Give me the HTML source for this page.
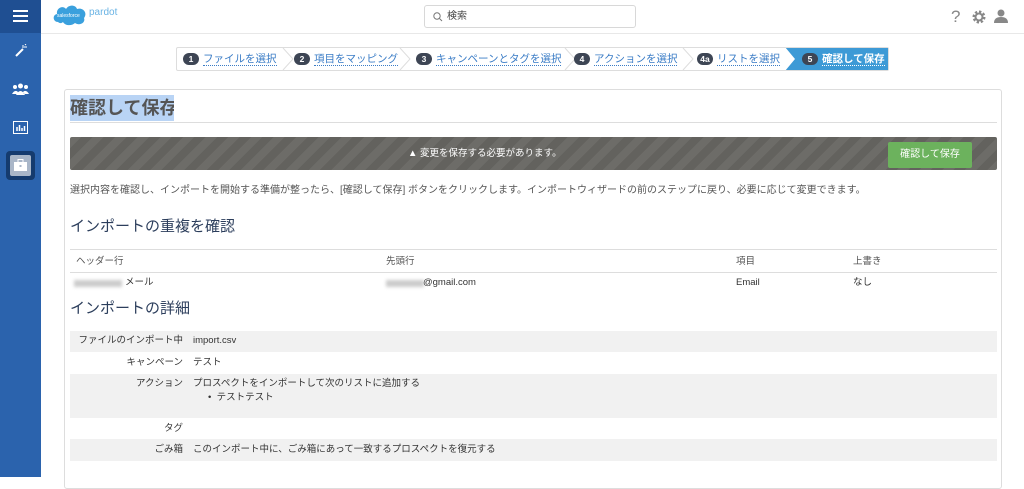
<!DOCTYPE html>
<html><head><meta charset="utf-8"><style>
*{box-sizing:border-box;margin:0;padding:0}
body{width:1024px;height:477px;overflow:hidden;background:#fff;font-family:"Liberation Sans","Noto Sans CJK JP",sans-serif;color:#333;position:relative}
.sb{position:absolute;left:0;top:0;width:41px;height:477px;background:#2b63ad}
.sbt{position:absolute;left:0;top:0;width:41px;height:33px;background:#1f4f92}
.hdr{position:absolute;left:41px;top:0;right:0;height:34px;border-bottom:1px solid #e8e8e8;background:#fff}
.search{position:absolute;left:424px;top:5px;width:212px;height:23px;border:1px solid #d8d8d8;border-radius:3px;font-size:10px;line-height:12px;color:#444;padding:5px 0 0 22px}
.crumbs{position:absolute;left:176px;top:47px;width:713px;height:24px;border:1px solid #ddd;border-radius:2px;background:#fff;font-size:10.5px;line-height:13px}
.st{position:absolute;top:5px;color:#3a7cc6;white-space:nowrap}
.st span.t{border-bottom:1px dotted #3a7cc6}
.num{display:inline-block;background:#3d4554;color:#fff;border-radius:7px;font-size:8.5px;font-weight:bold;height:12px;line-height:12px;text-align:center;min-width:16px;padding:0 3px;margin-right:4px;vertical-align:top}
.panel{position:absolute;left:64px;top:89px;width:938px;height:400px;border:1px solid #ddd;border-radius:3px}
.small{font-size:10px;color:#555;line-height:12px;white-space:nowrap}
.h2{position:absolute;left:70px;font-size:15px;line-height:20px;color:#2c3e5c;white-space:nowrap}
.row{position:absolute;left:70px;width:927px;font-size:9.5px;line-height:12px;color:#333}
.row span{white-space:nowrap}
.lab{position:absolute;right:814px;text-align:right}
.val{position:absolute;left:123px}
</style></head><body>
<div class="sb"><div class="sbt"></div>
<div style="position:absolute;left:13px;top:10px;width:15px;height:2px;background:#fff;box-shadow:0 5px 0 #fff,0 10px 0 #fff"></div>
<svg style="position:absolute;left:14px;top:44px" width="13" height="13" viewBox="0 0 13 13"><path d="M2 12 L9 5" stroke="#fff" stroke-width="2"/><path d="M9 1v3M10 3h3M11 0l1 1" stroke="#fff" stroke-width="1"/></svg>
<svg style="position:absolute;left:12px;top:83px" width="17" height="13" viewBox="0 0 17 13"><circle cx="8.5" cy="3" r="2.5" fill="#fff"/><circle cx="3" cy="4" r="2" fill="#fff"/><circle cx="14" cy="4" r="2" fill="#fff"/><path d="M4 12 Q8.5 4 13 12Z M0 11 Q3 6 6 9 L5 11Z M17 11 Q14 6 11 9 L12 11Z" fill="#fff"/></svg>
<svg style="position:absolute;left:13px;top:121px" width="15" height="13" viewBox="0 0 15 13"><rect x="0.5" y="0.5" width="14" height="12" fill="none" stroke="#fff"/><path d="M4 10V6M6.5 10V4M9 10V7M11.5 10V5" stroke="#fff" stroke-width="1.5"/></svg>
<div style="position:absolute;left:6px;top:151px;width:29px;height:29px;border-radius:4px;background:#153b6e"></div>
<div style="position:absolute;left:10px;top:155px;width:21px;height:21px;border-radius:2px;background:#a9b6c8"></div>
<svg style="position:absolute;left:14px;top:159px" width="13" height="12" viewBox="0 0 13 12"><rect x="0" y="3" width="13" height="9" fill="#fff"/><rect x="4" y="0.5" width="5" height="3" fill="none" stroke="#fff"/><rect x="5.5" y="6" width="2" height="2" fill="#a9b6c8"/></svg>
</div>
<div class="hdr">
<svg style="position:absolute;left:11px;top:2px" width="36" height="24" viewBox="0 0 36 24"><path d="M6 20 C1 20 0 13 5 12 C4 6 11 3 14 7 C17 2 24 3 25 7 C31 5 36 11 32 16 C34 21 27 24 23 21 C20 24 13 24 11 20 C9 22 7 21 6 20Z" fill="#3aa0dd"/><text x="5" y="15" font-size="5" fill="#fff" font-family="Liberation Sans">salesforce</text></svg>
<div style="position:absolute;left:48px;top:7px;font-size:10px;line-height:12px;color:#69b3e4">pardot</div>
</div>
<div class="search"><svg style="position:absolute;left:8px;top:6px" width="10" height="10" viewBox="0 0 10 10"><circle cx="4" cy="4" r="3.2" fill="none" stroke="#777"/><path d="M6.5 6.5 9 9" stroke="#777"/></svg>検索</div>
<div style="position:absolute;left:951px;top:7px;font-size:17px;line-height:20px;color:#888">?</div>
<svg style="position:absolute;left:972px;top:10px" width="14" height="14" viewBox="0 0 14 14"><circle cx="7" cy="7" r="5" fill="none" stroke="#888" stroke-width="3" stroke-dasharray="2.2 1.7"/><circle cx="7" cy="7" r="3.5" fill="none" stroke="#888" stroke-width="2"/></svg>
<svg style="position:absolute;left:994px;top:9px" width="14" height="14" viewBox="0 0 14 14"><circle cx="7" cy="4" r="3.5" fill="#888"/><path d="M0 14 Q0 8 7 8 Q14 8 14 14Z" fill="#888"/></svg>

<div class="crumbs">
<svg style="position:absolute;left:0;top:0" width="711" height="22"><g fill="none" stroke="#ddd"><path d="M106 0l10 11-10 11M223 0l10 11-10 11M388 0l10 11-10 11M506 0l10 11-10 11"/></g><path d="M608 -1h104v24H608l10-12z" fill="#3d9ad6"/></svg>
<div class="st" style="left:6px"><span class="num">1</span><span class="t">ファイルを選択</span></div>
<div class="st" style="left:117px"><span class="num">2</span><span class="t">項目をマッピング</span></div>
<div class="st" style="left:239px"><span class="num">3</span><span class="t">キャンペーンとタグを選択</span></div>
<div class="st" style="left:397px"><span class="num">4</span><span class="t">アクションを選択</span></div>
<div class="st" style="left:520px"><span class="num">4a</span><span class="t">リストを選択</span></div>
<div class="st" style="left:625px;color:#fff;font-weight:bold"><span class="num">5</span><span class="t" style="border-color:#fff">確認して保存</span></div>
</div>

<div class="panel"></div>
<div style="position:absolute;left:70px;top:95px;height:26px;width:104px;background:#b9d4f5;font-size:18px;font-weight:bold;color:#555;line-height:26px;white-space:nowrap;overflow:hidden">確認して保存</div>
<div style="position:absolute;left:70px;top:122px;width:927px;height:1px;background:#ddd"></div>
<div style="position:absolute;left:70px;top:137px;width:927px;height:33px;border-radius:2px;background:repeating-linear-gradient(135deg,#6d6c68 0 8px,#63625e 8px 16px)"></div>
<div style="position:absolute;left:408px;top:148px;font-size:9.5px;line-height:12px;color:#fff;white-space:nowrap">▲ 変更を保存する必要があります。</div>
<div style="position:absolute;left:888px;top:142px;width:84px;height:26px;background:#6cb25d;border-radius:2px;color:#fff;font-size:10px;text-align:center;line-height:26px">確認して保存</div>
<div class="small" style="position:absolute;left:70px;top:185px">選択内容を確認し、インポートを開始する準備が整ったら、[確認して保存] ボタンをクリックします。インポートウィザードの前のステップに戻り、必要に応じて変更できます。</div>
<div class="h2" style="top:217px">インポートの重複を確認</div>
<div style="position:absolute;left:70px;top:249px;width:927px;height:1px;background:#ddd"></div>
<div style="position:absolute;left:70px;top:272px;width:927px;height:1px;background:#ddd"></div>
<div class="row" style="top:256px;color:#555"><span style="position:absolute;left:6px">ヘッダー行</span><span style="position:absolute;left:316px">先頭行</span><span style="position:absolute;left:666px">項目</span><span style="position:absolute;left:783px">上書き</span></div>
<div class="row" style="top:277px"><span style="position:absolute;left:4px;top:3px;width:48px;height:7px;background:#ccc;filter:blur(1.5px)"></span><span style="position:absolute;left:55px">メール</span><span style="position:absolute;left:316px;top:3px;width:38px;height:7px;background:#ccc;filter:blur(1.5px)"></span><span style="position:absolute;left:353px">@gmail.com</span><span style="position:absolute;left:666px">Email</span><span style="position:absolute;left:783px">なし</span></div>
<div class="h2" style="top:299px">インポートの詳細</div>
<div class="row" style="top:331px;height:21px;background:#f1f1f1"><span class="lab" style="top:4px">ファイルのインポート中</span><span class="val" style="top:4px">import.csv</span></div>
<div class="row" style="top:352px;height:22px"><span class="lab" style="top:5px">キャンペーン</span><span class="val" style="top:5px">テスト</span></div>
<div class="row" style="top:374px;height:44px;background:#f1f1f1"><span class="lab" style="top:4px">アクション</span><span class="val" style="top:4px">プロスペクトをインポートして次のリストに追加する</span><span class="val" style="top:18px;left:138px">•&nbsp; テストテスト</span></div>
<div class="row" style="top:418px;height:21px"><span class="lab" style="top:5px">タグ</span></div>
<div class="row" style="top:439px;height:22px;background:#f1f1f1"><span class="lab" style="top:5px">ごみ箱</span><span class="val" style="top:5px">このインポート中に、ごみ箱にあって一致するプロスペクトを復元する</span></div>
</body></html>
